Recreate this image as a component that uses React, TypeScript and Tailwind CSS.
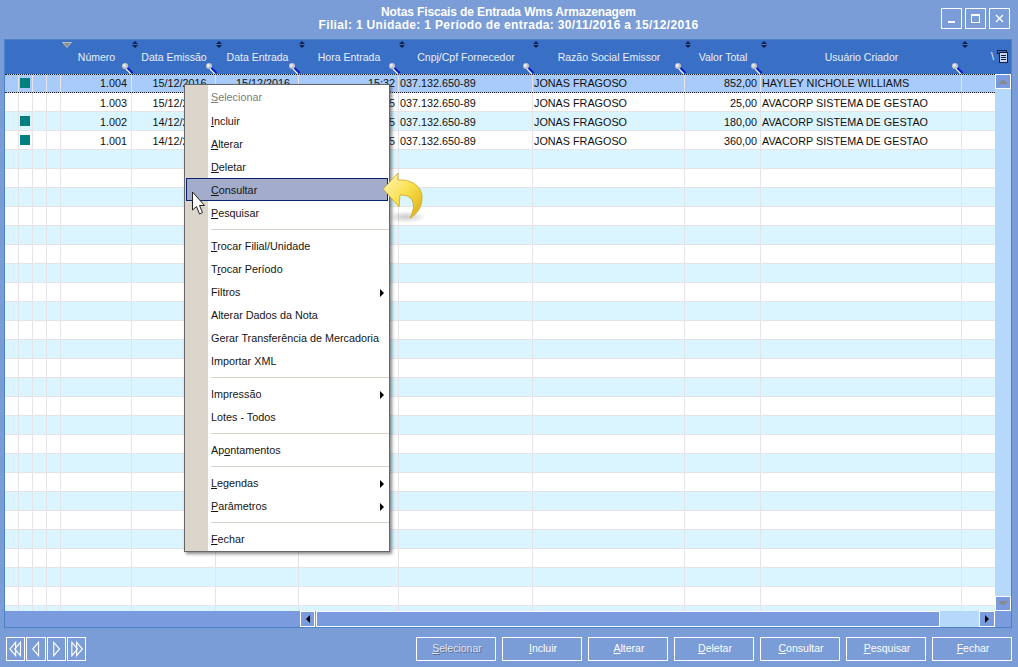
import React from "react";

const cols = "grid-cols-[14px_14px_14px_14px_71px_84px_83px_100px_134px_152px_76px_201px_minmax(0,1fr)]";

const headers: string[] = [
  "Número",
  "Data Emissão",
  "Data Entrada",
  "Hora Entrada",
  "Cnpj/Cpf Fornecedor",
  "Razão Social Emissor",
  "Valor Total",
  "Usuário Criador",
];

const rows = [
  { m: true, n: "1.004", e: "15/12/2016", d: "15/12/2016", h: "15:32", c: "037.132.650-89", r: "JONAS FRAGOSO", v: "852,00", u: "HAYLEY NICHOLE WILLIAMS" },
  { m: false, n: "1.003", e: "15/12/2016", d: "15/12/2016", h: "15:35", c: "037.132.650-89", r: "JONAS FRAGOSO", v: "25,00", u: "AVACORP SISTEMA DE GESTAO" },
  { m: true, n: "1.002", e: "14/12/2016", d: "14/12/2016", h: "15:15", c: "037.132.650-89", r: "JONAS FRAGOSO", v: "180,00", u: "AVACORP SISTEMA DE GESTAO" },
  { m: true, n: "1.001", e: "14/12/2016", d: "14/12/2016", h: "15:05", c: "037.132.650-89", r: "JONAS FRAGOSO", v: "360,00", u: "AVACORP SISTEMA DE GESTAO" },
];
const allRows = Array.from({ length: 29 }, (_, i) => rows[i] ?? null);

type Item = { pre?: string; u?: string; post?: string; sub?: boolean; dis?: boolean; hl?: boolean } | "sep";
const menu: Item[] = [
  { u: "S", post: "elecionar", dis: true },
  { u: "I", post: "ncluir" },
  { u: "A", post: "lterar" },
  { u: "D", post: "eletar" },
  { u: "C", post: "onsultar", hl: true },
  { u: "P", post: "esquisar" },
  "sep",
  { u: "T", post: "rocar Filial/Unidade" },
  { pre: "T", u: "r", post: "ocar Período" },
  { pre: "Filtros", sub: true },
  { pre: "Alterar Dados da Nota" },
  { pre: "Gerar Transferência de Mercadoria" },
  { pre: "Importar XML" },
  "sep",
  { pre: "Impressão", sub: true },
  { pre: "Lotes - Todos" },
  "sep",
  { pre: "Ap", u: "o", post: "ntamentos" },
  "sep",
  { u: "L", post: "egendas", sub: true },
  { u: "P", post: "arâmetros", sub: true },
  "sep",
  { u: "F", post: "echar" },
];

function Sort() {
  return (
    <svg width="6" height="7" viewBox="0 0 6 7" className="absolute left-0 top-[1px]">
      <path d="M3 0 L6 3 H0 Z M0 4 H6 L3 7 Z" fill="#10204a" />
    </svg>
  );
}

function Lens() {
  return (
    <svg width="11" height="11" viewBox="0 0 11 11" className="absolute right-[-1px] bottom-0">
      <line x1="3.8" y1="5.6" x2="8.8" y2="10.8" stroke="#ffffff" strokeWidth="1.4" />
      <line x1="5" y1="4.5" x2="10.5" y2="10" stroke="#0a1fc8" strokeWidth="2" />
      <circle cx="3" cy="3" r="3" fill="#bfc4cc" />
      <circle cx="2.4" cy="2.4" r="1.3" fill="#f0f2f5" />
    </svg>
  );
}

function Row({ row, i }: { row: (typeof rows)[number] | null; i: number }) {
  const bg = i === 0 ? "bg-[#a9cbfb]" : i % 2 === 1 ? "bg-white" : "bg-[#daf5ff]";
  const edge = i === 0 ? "border-y border-dotted border-y-[#222]" : "border-b border-[#e6e3e6]";
  const c = `border-r border-[#e6e3e6] h-full flex items-center overflow-hidden whitespace-nowrap ${i === 0 ? "pb-[1px]" : "pt-[2px]"}`;
  return (
    <div className={`grid ${cols} h-[19px] shrink-0 ${edge} ${bg}`}>
      <div className={c} />
      <div className={`${c} justify-center pr-[2px]`}>
        {row?.m && <div className={`w-[10px] h-[10px] bg-[#008080] shrink-0 ${i === 0 ? "" : "mb-[2px]"}`} />}
      </div>
      <div className={c} />
      <div className={c} />
      <div className={`${c} justify-end pr-[4px]`}>{row?.n}</div>
      <div className={`${c} justify-center pl-[12px]`}>{row?.e}</div>
      <div className={`${c} justify-center pl-[12px]`}>{row?.d}</div>
      <div className={`${c} justify-end pr-[3px]`}>{row?.h}</div>
      <div className={`${c} pl-[1px]`}>{row?.c}</div>
      <div className={`${c} pl-[1px]`}>{row?.r}</div>
      <div className={`${c} justify-end pr-[3px]`}>{row?.v}</div>
      <div className={`${c} pl-[1px]`}>{row?.u}</div>
      <div className="h-full" />
    </div>
  );
}

function NavIcon({ kind }: { kind: "first" | "prev" | "next" | "last" }) {
  const p: Record<string, string> = {
    first: "M9 2 L3 9 L9 16 Z M14 2 L8 9 L14 16 Z",
    prev: "M12 2 L6 9 L12 16 Z",
    next: "M6 2 L12 9 L6 16 Z",
    last: "M4 2 L10 9 L4 16 Z M9 2 L15 9 L9 16 Z",
  };
  return (
    <svg width="18" height="18" viewBox="0 0 18 18">
      <path d={p[kind]} fill="none" stroke="white" strokeWidth="1.2" />
    </svg>
  );
}

function Btn({ u, post, dis }: { u: string; post: string; dis?: boolean }) {
  return (
    <div className={`w-[80px] h-[24px] border border-white flex items-center justify-center pl-[2px] text-[10.5px] ${dis ? "text-[#dfe6f4] [text-shadow:1px_1px_0_#5c6f99]" : "text-white"}`}>
      <span><u>{u}</u>{post}</span>
    </div>
  );
}

function WinBtn({ children }: { children: React.ReactNode }) {
  return <div className="w-[21px] h-[21px] border border-white flex items-center justify-center">{children}</div>;
}

export default function App() {
  return (
    <div className="relative w-[1018px] h-[667px] overflow-hidden flex flex-col bg-[#7a9cd7] font-['Liberation_Sans',sans-serif] text-[10.8px] text-[#101010]">
      {/* Title bar */}
      <div className="h-[39px] shrink-0 flex flex-col items-center pt-[6px] pr-[1px] text-white font-bold text-[12px] leading-[13px]">
        <div className="tracking-[-0.12px]">Notas Fiscais de Entrada Wms Armazenagem</div>
        <div className="tracking-[0.34px]">Filial: 1 Unidade: 1 Período de entrada: 30/11/2016 a 15/12/2016</div>
      </div>
      <div className="absolute right-[8px] top-[8px] flex gap-[3px]">
        <WinBtn><div className="w-[7px] h-[2px] bg-white mt-[6px]" /></WinBtn>
        <WinBtn><div className="w-[9px] h-[9px] border border-white border-t-2" /></WinBtn>
        <WinBtn>
          <svg width="9" height="9" viewBox="0 0 9 9"><path d="M1 1 L8 8 M8 1 L1 8" stroke="white" strokeWidth="1.3" /></svg>
        </WinBtn>
      </div>

      {/* Grid frame */}
      <div className="ml-[4px] mr-[6px] h-[589px] shrink-0 border border-[#4c82c9] flex flex-col">
        {/* Header */}
        <div className={`grid ${cols} h-[34px] shrink-0 bg-[#3a6fc6] text-[#e8effa]`}>
          <div /><div /><div /><div />
          {headers.map((h, i) => (
            <div key={h} className="relative flex items-center justify-center whitespace-nowrap pt-[2px]">
              <span className="text-[10.5px]">{h}</span>
              <Lens />
              {i === 0 ? (
                <svg width="10" height="6" viewBox="0 0 10 6" className="absolute left-[1px] top-[2px]">
                  <path d="M0.5 0.5 H9.5 L5 5.5 Z" fill="#8f8f8f" stroke="#d0ccbb" strokeWidth="0.8" />
                </svg>
              ) : (
                <Sort />
              )}
            </div>
          ))}
          <div className="relative flex items-center justify-end pr-[3px] overflow-hidden">
            <Sort />
            <span className="mr-[3px] mt-[-2px]">\</span>
            <svg width="11" height="13" viewBox="0 0 11 13" className="mt-[-1px]">
              <rect x="0.5" y="0.5" width="9" height="3" fill="#3a6fc6" stroke="#0f1d42" />
              <rect x="2.5" y="2.5" width="8" height="10" fill="#c7d7ef" stroke="#0f1d42" />
              <path d="M4 5.5 H9 M4 7.5 H9 M4 9.5 H9" stroke="#0f1d42" />
            </svg>
          </div>
        </div>
        {/* Body */}
        <div className="h-[537px] shrink-0 flex overflow-hidden">
          <div className="flex-1 flex flex-col overflow-hidden">
            {allRows.map((r, i) => <Row key={i} row={r} i={i} />)}
          </div>
          <div className="w-[16px] shrink-0 bg-[#b6d9fb] flex flex-col justify-between">
            <div className="h-[15px] border border-white bg-[#7a9cde] flex items-center justify-center">
              <div className="w-0 h-0 border-x-[5px] border-x-transparent border-b-[5px] border-b-[#8a8a8a]" />
            </div>
            <div className="h-[15px] border border-white bg-[#7a9cde] flex items-center justify-center">
              <div className="w-0 h-0 border-x-[5px] border-x-transparent border-t-[5px] border-t-[#8a8a8a]" />
            </div>
          </div>
        </div>
        {/* Horizontal scrollbar */}
        <div className="flex-1 flex bg-[#7a9cde]">
          <div className="w-[295px] shrink-0" />
          <div className="w-[15px] shrink-0 border border-white flex items-center justify-center">
            <div className="w-0 h-0 border-y-[4px] border-y-transparent border-r-[4px] border-r-black" />
          </div>
          <div className="w-[624px] ml-[1px] shrink-0 border border-white" />
          <div className="w-[39px] shrink-0 bg-[#b6d9fb]" />
          <div className="w-[16px] shrink-0 border border-white flex items-center justify-center">
            <div className="w-0 h-0 border-y-[4px] border-y-transparent border-l-[4px] border-l-black" />
          </div>
        </div>
      </div>

      {/* Footer */}
      <div className="flex-1 flex items-start justify-between px-[6px] pt-[9px]">
        <div className="flex gap-[1px]">
          {(["first", "prev", "next", "last"] as const).map((k) => (
            <div key={k} className="w-[19.3px] h-[24px] border border-white flex items-center justify-center"><NavIcon kind={k} /></div>
          ))}
        </div>
        <div className="flex gap-[6px]">
          <Btn u="S" post="elecionar" dis />
          <Btn u="I" post="ncluir" />
          <Btn u="A" post="lterar" />
          <Btn u="D" post="eletar" />
          <Btn u="C" post="onsultar" />
          <Btn u="P" post="esquisar" />
          <Btn u="F" post="echar" />
        </div>
      </div>

      {/* Context menu */}
      <div className="absolute left-[184px] top-[84px] w-[206px] h-[468px] bg-white border border-[#666] shadow-[2px_2px_3px_rgba(60,60,60,0.6)] flex flex-col py-[1px] pl-[1px]">
        <div className="absolute left-0 top-0 bottom-0 w-[23px] bg-[#dbd5cc]" />
        {menu.map((m, i) =>
          m === "sep" ? (
            <div key={i} className="h-[10px] shrink-0 flex items-center pl-[25px]"><div className="h-[1px] w-full bg-[#d6d2c8]" /></div>
          ) : (
            <div key={i} className={`relative h-[23px] shrink-0 flex items-center whitespace-nowrap ${i === 0 ? "" : "pt-[2px]"} ${m.hl ? "bg-[#a4accb] border border-[#0a246a] w-[202px] pl-[24px]" : "pl-[25px]"} ${m.dis ? "text-[#7d7d7d]" : "text-[#151515]"}`}>
              <span>{m.pre}{m.u && <u>{m.u}</u>}{m.post}</span>
              {m.sub && <div className="absolute right-[5px] w-0 h-0 border-y-[4px] border-y-transparent border-l-[4px] border-l-black" />}
            </div>
          )
        )}
      </div>

      {/* Pointer */}
      <svg width="15" height="25" viewBox="0 0 15 25" className="absolute left-[191px] top-[191px]">
        <path d="M1.5 1 V19 L5.5 15.5 L8.5 23 L11.5 21.5 L8.5 14.5 L13.5 14.5 Z" fill="white" stroke="#222" strokeWidth="1" />
      </svg>

      {/* Yellow return arrow */}
      <svg width="46" height="54" viewBox="0 0 46 54" className="absolute left-[382px] top-[170px]">
        <defs>
          <linearGradient id="ya" x1="0" y1="0" x2="1" y2="1">
            <stop offset="0" stopColor="#fff8c0" />
            <stop offset="0.5" stopColor="#f9e04e" />
            <stop offset="1" stopColor="#dca90f" />
          </linearGradient>
          <radialGradient id="ys"><stop offset="0" stopColor="#777" stopOpacity="0.4" /><stop offset="1" stopColor="#777" stopOpacity="0" /></radialGradient>
        </defs>
        <ellipse cx="24" cy="47" rx="20" ry="6" fill="url(#ys)" />
        <path d="M1.3 19 L16 3 V10 C30 9 41 17 40 29 C39.5 38 34 45 28 48 C31 42 33 35 30 30 C28 26 23 25 18 25 L17 37 Z" fill="url(#ya)" stroke="#cfa31a" strokeWidth="0.8" />
      </svg>
    </div>
  );
}
